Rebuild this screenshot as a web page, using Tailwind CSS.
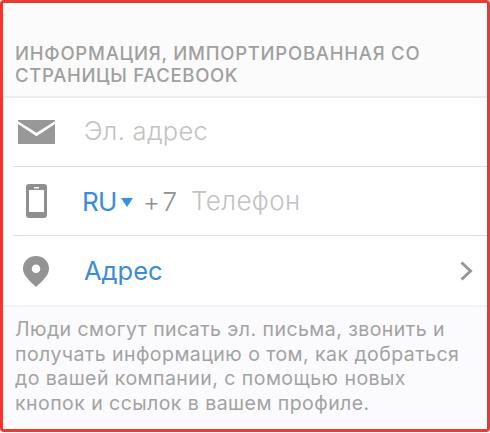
<!DOCTYPE html>
<html lang="ru">
<head>
<meta charset="utf-8">
<title>Контактная информация</title>
<script src="https://cdn.jsdelivr.net/npm/@tailwindcss/browser@4"></script>
</head>
<body class="bg-white font-['Inter','Liberation_Sans',sans-serif] overflow-hidden">
<main class="flex h-[432px] w-[490px] flex-col overflow-hidden rounded-[4px] border-3 border-[#e93a2f] bg-white">
  <header class="h-[95px] shrink-0 border-b-2 border-[#eeeeee] bg-[#fbfbfb] pt-[39px] pl-[12px] text-[18.500px] leading-[22px] font-medium whitespace-nowrap text-[#a0a0a0]">
    <div class="tracking-[0.760px]">ИНФОРМАЦИЯ, ИМПОРТИРОВАННАЯ СО</div>
    <div class="tracking-[0.680px]">СТРАНИЦЫ FACEBOOK</div>
  </header>
  <section class="flex h-[207px] shrink-0 flex-col pl-[10px] text-[26px] leading-[32px] whitespace-nowrap">
    <div class="flex h-[69px] items-center border-b border-[#dedede]">
      <svg class="ml-[5px] h-[24px] w-[37px]" viewBox="0 0 37 24" fill="#989898"><path d="M0 0H37V1.2L18.5 12.7L0 1.2Z"/><path d="M0 4L18.5 16.2L37 4V24H0Z"/></svg>
      <span class="-mt-[2px] ml-[29px] text-[25.500px] font-light tracking-[0.300px] text-[#c2c2c2]">Эл. адрес</span>
    </div>
    <div class="flex h-[69px] items-center border-b border-[#dedede]">
      <svg class="ml-[13px] h-[34px] w-[21px]" viewBox="0 0 21 34"><path fill="#8f8f8f" fill-rule="evenodd" d="M3 0H18Q21 0 21 3V31Q21 34 18 34H3Q0 34 0 31V3Q0 0 3 0ZM3 6V28H18V6ZM8 3V4.500H13V3Z"/></svg>
      <span class="mt-[2px] ml-[35px] w-[35px] tracking-[-0.700px] text-[#3b8cd8]">RU</span>
      <svg class="mt-[2px] ml-[4px] h-[9px] w-[12px]" viewBox="0 0 12 10" preserveAspectRatio="none"><path d="M0 0H12L6 10Z" fill="#3890ee"/></svg>
      <span class="mt-[2px] ml-[10px] w-[36px] tracking-[3px] font-light text-[#919191]">+7</span>
      <span class="ml-[12px] font-light tracking-[0.350px] text-[#c2c2c2]">Телефон</span>
    </div>
    <div class="flex h-[69px] items-center">
      <svg class="ml-[10px] mt-[2px] h-[31px] w-[26px]" viewBox="0 0 26 31"><path fill="#949494" fill-rule="evenodd" d="M13 0C5.500 0 0 5.500 0 12.500C0 20 7 25 13 31C19 25 26 20 26 12.500C26 5.500 20.500 0 13 0ZM13 8.500A4.300 4.300 0 1 1 13 17.100A4.300 4.300 0 1 1 13 8.500Z"/></svg>
      <span class="ml-[35px] text-[25.500px] text-[#3b8cd8]">Адрес</span>
      <svg class="ml-auto mr-[14px] h-[20px] w-[13px]" viewBox="0 0 13 20"><path d="M1.500 1.500L10.500 10L1.500 18.500" fill="none" stroke="#979797" stroke-width="3"/></svg>
    </div>
  </section>
  <footer class="flex-1 border-t-2 border-[#f2f2f2] bg-[#fbfafc] pt-[10px] pl-[12px] text-[19.500px] leading-[24.600px] tracking-[0.450px] whitespace-nowrap text-[#a2a2a3]">
    <div>Люди смогут писать эл. письма, звонить и</div>
    <div>получать информацию о том, как добраться</div>
    <div>до вашей компании, с помощью новых</div>
    <div>кнопок и ссылок в вашем профиле.</div>
  </footer>
</main>
</body>
</html>
